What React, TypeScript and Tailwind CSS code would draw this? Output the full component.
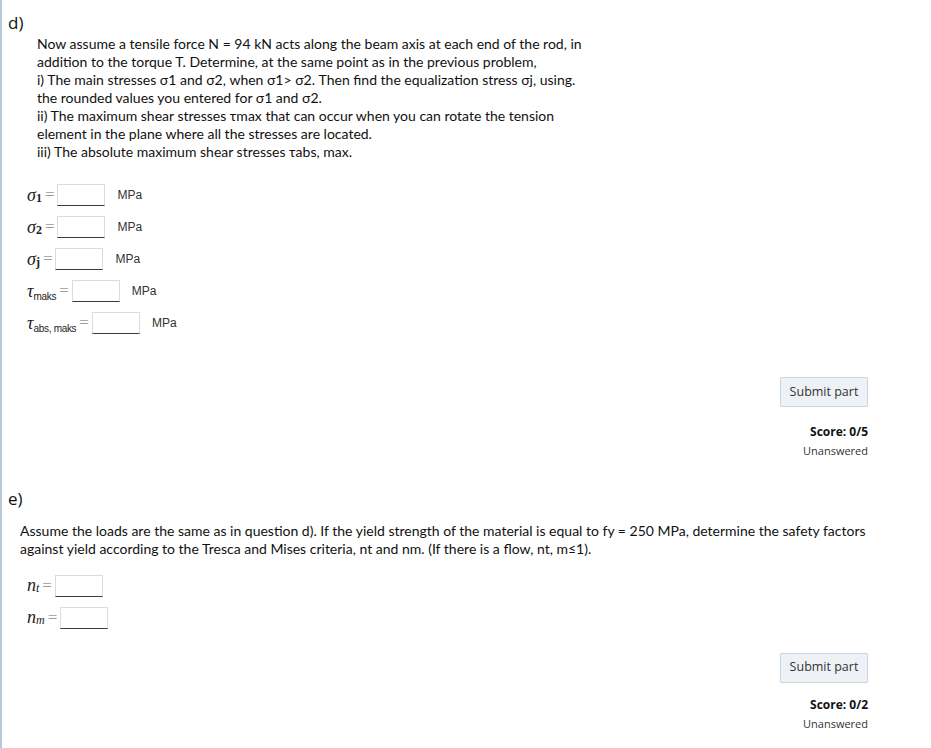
import React from "react";

const body = "font-['Lato','Open_Sans',sans-serif]";
const ui = "font-['Open_Sans','Noto_Sans',sans-serif]";
const math = "font-['Liberation_Serif','DejaVu_Serif',serif]";
const arial = "font-['Liberation_Sans',Arial,sans-serif]";

function Box() {
  return (
    <span className="inline-block h-[22px] w-[48px] border border-[#dcdcdc] border-b-[#3a3a3a] bg-white" />
  );
}

function Eq() {
  return <span className={`text-[17px] text-[#9a9a9a] mx-[3px] ${math}`}>=</span>;
}

function Row({
  label,
  unit = true,
}: {
  label: React.ReactNode;
  unit?: boolean;
}) {
  return (
    <div className="flex items-center h-[32px] pl-[25px]">
      {label}
      <Eq />
      <Box />
      {unit && <span className={`ml-[12px] text-[12px] text-[#333] ${arial}`}>MPa</span>}
    </div>
  );
}

function Sigma({ sub }: { sub: string }) {
  return (
    <span className={`text-[18px] italic text-[#222] ${math}`}>
      σ<sub className="text-[12px] not-italic font-bold relative top-[1px]">{sub}</sub>
    </span>
  );
}

function Tau({ sub }: { sub: string }) {
  return (
    <span className={`text-[18px] italic text-[#222] whitespace-nowrap ${math}`}>
      τ
      <sub className={`text-[10px] not-italic tracking-[-0.3px] relative top-[3px] ${arial}`}>{sub}</sub>
    </span>
  );
}

function N({ sub }: { sub: string }) {
  return (
    <span className={`text-[18px] italic text-[#222] ${math}`}>
      n<sub className="text-[12px] relative top-[1px]">{sub}</sub>
    </span>
  );
}

function Submit({ score, gap }: { score: string; gap: string }) {
  return (
    <div className="flex flex-col items-end pr-[63px]">
      <button
        className={`h-[30px] w-[88px] border border-[#c9d5df] bg-[#eef2f6] text-[12.5px] text-[#333] rounded-[1px] ${ui}`}
      >
        Submit part
      </button>
      <div className={`${gap} text-[12px] font-bold text-[#111] ${ui}`}>Score: {score}</div>
      <div className={`mt-[2px] text-[11px] text-[#333] ${ui}`}>Unanswered</div>
    </div>
  );
}

export default function App() {
  return (
    <div className="min-h-[748px] w-[931px] bg-white border-l-2 border-[#b7c9d9] text-[#111]">
      <div className={`pl-[6px] pt-[12px] text-[17px] leading-[22px] ${ui}`}>d)</div>
      <p className={`ml-[35px] mt-[1px] text-[14px] leading-[18px] whitespace-nowrap ${body}`}>
        Now assume a tensile force N = 94 kN acts along the beam axis at each end of the rod, in
        <br />
        addition to the torque T. Determine, at the same point as in the previous problem,
        <br />
        i) The main stresses σ1 and σ2, when σ1&gt; σ2. Then find the equalization stress σj, using.
        <br />
        the rounded values you entered for σ1 and σ2.
        <br />
        ii) The maximum shear stresses τmax that can occur when you can rotate the tension
        <br />
        element in the plane where all the stresses are located.
        <br />
        iii) The absolute maximum shear stresses τabs, max.
      </p>

      <div className="mt-[18px]">
        <Row label={<Sigma sub="1" />} />
        <Row label={<Sigma sub="2" />} />
        <Row label={<Sigma sub="j" />} />
        <Row label={<Tau sub="maks" />} />
        <Row label={<Tau sub="abs, maks" />} />
      </div>

      <div className="mt-[38px]">
        <Submit score="0/5" gap="mt-[16px]" />
      </div>

      <div className={`pl-[6px] mt-[28px] text-[17px] leading-[22px] ${ui}`}>e)</div>
      <p className={`ml-[18px] mt-[12px] text-[14px] leading-[18px] whitespace-nowrap ${body}`}>
        Assume the loads are the same as in question d). If the yield strength of the material is equal to fy = 250 MPa, determine the safety factors
        <br />
        against yield according to the Tresca and Mises criteria, nt and nm. (If there is a flow, nt, m≤1).
      </p>

      <div className="mt-[12px]">
        <Row unit={false} label={<N sub="t" />} />
        <Row unit={false} label={<N sub="m" />} />
      </div>

      <div className="mt-[19px] pb-[20px]">
        <Submit score="0/2" gap="mt-[13px]" />
      </div>
    </div>
  );
}
